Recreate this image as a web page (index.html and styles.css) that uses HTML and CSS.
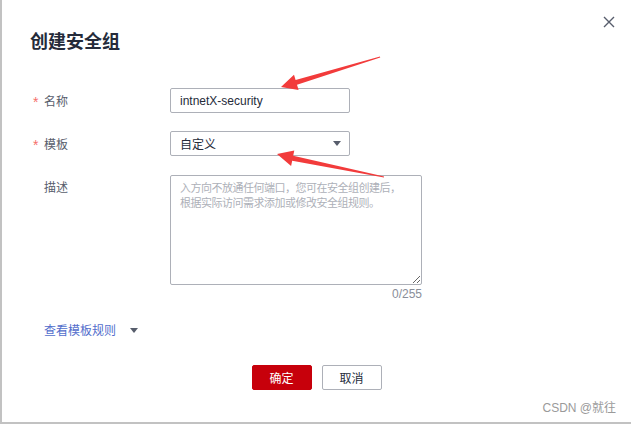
FILE: index.html
```html
<!DOCTYPE html>
<html lang="zh-CN">
<head>
    <meta charset="UTF-8">
    <meta name="viewport" content="width=device-width, initial-scale=1.0">
    <title>创建安全组</title>
    <link rel="stylesheet" href="styles.css">
</head>
<body>

    <div class="dialog">
        <div class="header">
            <h1 class="title">创建安全组</h1>
            <svg class="close" width="12" height="12" viewBox="0 0 12 12">
                <path d="M1 1 L11 11 M11 1 L1 11" stroke="#575d6c" stroke-width="1.4" fill="none"/>
            </svg>
        </div>

        <div class="form">
            <div class="row">
                <label class="label"><span class="star">*</span>名称</label>
                <input class="field" type="text" value="intnetX-security"/>
            </div>

            <div class="row">
                <label class="label"><span class="star">*</span>模板</label>
                <div class="field select">
                    <span>自定义</span>
                    <span class="caret"></span>
                </div>
            </div>

            <div class="row row-top">
                <label class="label"><span class="star"></span>描述</label>
                <div>
                    <textarea class="desc" placeholder="入方向不放通任何端口，您可在安全组创建后，&#10;根据实际访问需求添加或修改安全组规则。"></textarea>
                    <div class="counter">0/255</div>
                </div>
            </div>

            <div class="rules">
                <span>查看模板规则</span>
                <span class="caret"></span>
            </div>
        </div>

        <div class="footer">
            <button class="btn btn-primary">确定</button>
            <button class="btn">取消</button>
        </div>

        <div class="watermark">CSDN @就往</div>

        <!-- red annotation arrows drawn on top of the screenshot -->
        <svg class="arrows" width="631" height="424" viewBox="0 0 631 424">
            <polygon fill="#f23b3b" points="281,87 294,74.7 295.6,80 380,56.5 380.2,57.5 297,84.8 298.6,90"/>
            <polygon fill="#f23b3b" points="277,154 294.3,150.4 293.2,155.7 384.1,176.5 383.9,177.6 292.2,160.7 291.1,166"/>
        </svg>
    </div>

</body>
</html>
```

FILE: styles.css
```css
body {
    margin: 0;
    background: #fff;
    font-family: "Noto Sans CJK SC", "Liberation Sans", sans-serif;
    color: #252b3a;
}

.dialog {
    position: relative;
    width: 631px;
    height: 424px;
    box-sizing: border-box;
    border-left: 2px solid #c2c2c2;
    border-bottom: 2px solid #c2c2c2;
    background: #fff;
}

.header {
    display: flex;
    justify-content: space-between;
    align-items: flex-start;
    padding: 28px 16px 0 28px;
}

.title {
    margin: 0;
    font-size: 18px;
    line-height: 24px;
    font-weight: 700;
    color: #252b3a;
}

.close {
    margin-top: -12px;
}

.form {
    padding-left: 28px;
    margin-top: 36px;
}

.row {
    display: grid;
    grid-template-columns: 140px auto;
    align-items: center;
    margin-bottom: 18px;
}

.row-top {
    align-items: start;
    margin-top: 19px;
}

.row-top .label {
    padding-top: 3px;
}

.label {
    display: flex;
    align-items: center;
    font-size: 12px;
    line-height: 18px;
    color: #575d6c;
    padding-left: 3px;
}

.star {
    display: inline-block;
    width: 11px;
    color: #f66f6a;
    font-family: "Liberation Sans", sans-serif;
    font-size: 14px;
    line-height: 14px;
    padding-top: 3px;
}

.field {
    box-sizing: border-box;
    width: 180px;
    height: 25px;
    margin: 0;
    padding: 0 9px;
    border: 1px solid #adb0b8;
    border-radius: 2px;
    font-family: "Liberation Sans", "Noto Sans CJK SC", sans-serif;
    font-size: 12px;
    color: #252b3a;
    background: #fff;
    outline: none;
}

.select {
    display: flex;
    justify-content: space-between;
    align-items: center;
    font-family: "Noto Sans CJK SC", sans-serif;
    padding-right: 8px;
}

.caret {
    width: 0;
    height: 0;
    border-left: 4px solid transparent;
    border-right: 4px solid transparent;
    border-top: 5px solid #575d6c;
}

.desc {
    display: block;
    box-sizing: border-box;
    width: 252px;
    height: 110px;
    margin: 0;
    padding: 4px 2px 4px 9px;
    border: 1px solid #adb0b8;
    border-radius: 2px;
    font-family: "Noto Sans CJK SC", sans-serif;
    font-size: 11px;
    line-height: 15px;
    letter-spacing: -0.5px;
    color: #252b3a;
    outline: none;
}

.desc::placeholder {
    color: #adb0b8;
}

.counter {
    width: 252px;
    text-align: right;
    font-family: "Liberation Sans", sans-serif;
    font-size: 12px;
    line-height: 14px;
    margin-top: 2px;
    color: #8a8e99;
}

.rules {
    display: flex;
    align-items: center;
    gap: 14px;
    margin-top: 21px;
    padding-left: 14px;
    font-size: 12px;
    line-height: 16px;
    color: #526ecc;
}

.footer {
    display: flex;
    justify-content: center;
    gap: 10px;
    margin-top: 27px;
}

.btn {
    box-sizing: border-box;
    width: 60px;
    height: 25px;
    padding: 0;
    border: 1px solid #adb0b8;
    border-radius: 2px;
    background: #fff;
    font-family: "Noto Sans CJK SC", sans-serif;
    font-size: 12px;
    color: #252b3a;
    cursor: pointer;
}

.btn-primary {
    border-color: #c7000b;
    background: #c7000b;
    color: #fff;
}

.watermark {
    position: absolute;
    right: 15px;
    bottom: 7px;
    font-family: "Liberation Sans", "Noto Sans CJK SC", sans-serif;
    font-size: 12px;
    color: #9a9a9a;
}

.arrows {
    position: absolute;
    left: -2px;
    top: 0;
    pointer-events: none;
}
```
